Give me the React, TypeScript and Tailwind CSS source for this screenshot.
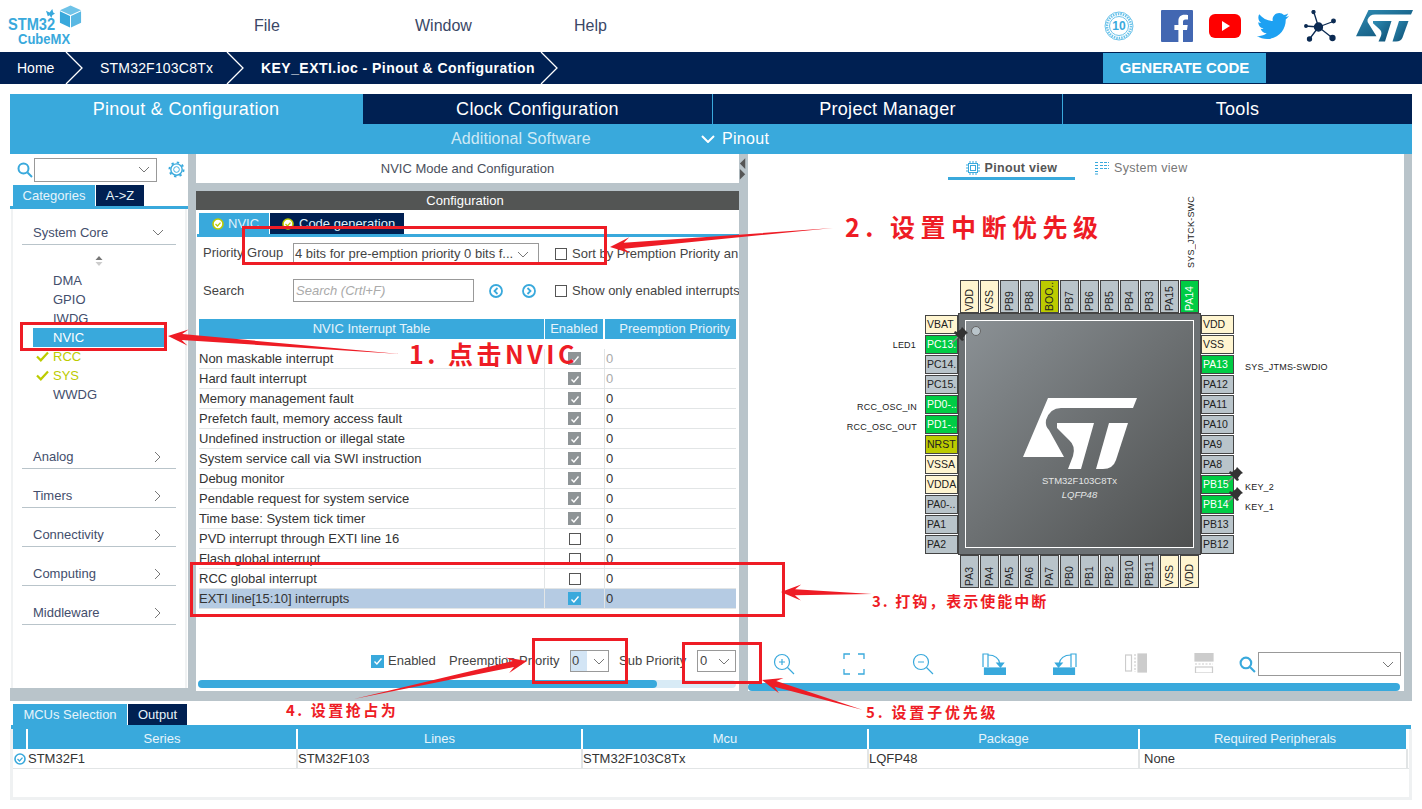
import { FaTwitter } from "react-icons/fa";

const BLUE = "#39a9dc";

const INTERRUPTS = [
  "Non maskable interrupt",
  "Hard fault interrupt",
  "Memory management fault",
  "Prefetch fault, memory access fault",
  "Undefined instruction or illegal state",
  "System service call via SWI instruction",
  "Debug monitor",
  "Pendable request for system service",
  "Time base: System tick timer",
  "PVD interrupt through EXTI line 16",
  "Flash global interrupt",
  "RCC global interrupt",
  "EXTI line[15:10] interrupts",
];

const TOP_PINS = ["VDD", "VSS", "PB9", "PB8", "BOO..", "PB7", "PB6", "PB5", "PB4", "PB3", "PA15", "PA14"];
const LEFT_PINS = ["VBAT", "PC13..", "PC14..", "PC15..", "PD0-..", "PD1-..", "NRST", "VSSA", "VDDA", "PA0-..", "PA1", "PA2"];
const RIGHT_PINS = ["VDD", "VSS", "PA13", "PA12", "PA11", "PA10", "PA9", "PA8", "PB15", "PB14", "PB13", "PB12"];
const BOTTOM_PINS = ["PA3", "PA4", "PA5", "PA6", "PA7", "PB0", "PB1", "PB2", "PB10", "PB11", "VSS", "VDD"];

const GREEN_PINS = ["PA14", "PC13..", "PD0-..", "PD1-..", "PA13", "PB15", "PB14"];
const OLIVE_PINS = ["BOO..", "NRST"];
const POWER_PINS = ["VDD", "VSS", "VBAT", "VSSA", "VDDA"];

function pinColor(name: string) {
  if (GREEN_PINS.includes(name)) return "bg-[#00cc44] text-white";
  if (OLIVE_PINS.includes(name)) return "bg-[#bccb00] text-[#222]";
  if (POWER_PINS.includes(name)) return "bg-[#fff5d0] text-[#222]";
  return "bg-[#b9c4ca] text-[#222]";
}

function Chevron({ className = "" }: { className?: string }) {
  return (
    <svg viewBox="0 0 12 7" className={`h-[7px] w-[12px] ${className}`} fill="none" stroke="#777" strokeWidth="1">
      <path d="M1 1l5 5 5-5" />
    </svg>
  );
}

function SearchIcon({ className = "" }: { className?: string }) {
  return (
    <svg viewBox="0 0 16 16" className={className} fill="none" stroke={BLUE} strokeWidth="2">
      <circle cx="6.5" cy="6.5" r="5" />
      <path d="M10.5 10.5l4.5 4.5" />
    </svg>
  );
}

function TickBadge({ color = "#bccb00" }: { color?: string }) {
  return (
    <svg viewBox="0 0 12 12" className="h-[12px] w-[12px] shrink-0">
      <circle cx="6" cy="6" r="5" fill="#fff" stroke={color} strokeWidth="1.6" />
      <path d="M3.5 6l2 2 3-3.4" fill="none" stroke={color} strokeWidth="1.3" />
    </svg>
  );
}

function Checkbox({ state }: { state: "off" | "grey" | "blue" }) {
  if (state === "off") return <span className="block h-[12px] w-[12px] shrink-0 border border-[#555] bg-white" />;
  return (
    <span className={`flex h-[13px] w-[13px] shrink-0 items-center justify-center ${state === "grey" ? "bg-[#8e9496]" : "bg-[#39a9dc]"}`}>
      <svg viewBox="0 0 10 10" className="h-[10px] w-[10px]" fill="none" stroke="#fff" strokeWidth="1.4">
        <path d="M1.5 5.5l2.4 2.4 4.6-5.4" />
      </svg>
    </span>
  );
}

function Logo() {
  return (
    <div className="relative h-[52px] w-[90px] shrink-0 text-[#39a9dc]">
      <span className="absolute left-[8px] top-[17px] origin-left scale-x-[0.86] text-[17px] font-bold leading-[15px]">STM32</span>
      <span className="absolute left-[18px] top-[32px] origin-left scale-x-[0.84] text-[15.500px] font-bold leading-[13px]">CubeMX</span>
      <svg viewBox="0 0 26 26" className="absolute left-[58px] top-[4px] h-[26px] w-[25px]">
        <path d="M13 1l11 5-11 5L2 6z" fill="#6fc3e8" />
        <path d="M2 7l10.5 5v12L2 19z" fill="#39a9dc" />
        <path d="M24 7l-10.500 5v12L24 19z" fill="#5ab8e3" />
      </svg>
      <svg viewBox="0 0 10 10" className="absolute left-[46px] top-[9px] h-[9px] w-[9px]" fill="#39a9dc">
        <path d="M0 2l4 2 3-4 1 4 2 1-3 2-1 3-2-3-2 1z" />
      </svg>
    </div>
  );
}

function StLogo({ className = "", fill }: { className?: string; fill: string }) {
  return (
    <svg viewBox="0 0 114 72" preserveAspectRatio="none" className={className}>
      <defs>
        <linearGradient id="stgrad" x1="0" y1="0" x2="1" y2="1">
          <stop offset="0" stopColor="#2f8db5" />
          <stop offset="1" stopColor="#0b4a6f" />
        </linearGradient>
      </defs>
      <g fill={fill}>
        <path d="M25 0H114L110 10H38Q27 10 23 22Q22 28 26 32L41 59H0Z" />
        <path d="M34 25H71L58 71H45L50 58Q53 48 46 42L34 30Z" />
        <path d="M86 25H105L93 62Q90 71 80 71H73Z" />
      </g>
    </svg>
  );
}

function SocialIcons() {
  return (
    <div className="flex items-center">
      <svg viewBox="0 0 30 30" className="mr-[27px] h-[30px] w-[30px]" fill="none" stroke="#6cc3ea">
        <circle cx="15" cy="15" r="14" strokeWidth="1" />
        <circle cx="15" cy="15" r="12" strokeWidth="2.500" strokeDasharray="1.500 1" />
        <circle cx="15" cy="15" r="9.500" strokeWidth="1" />
        <text x="15" y="19" textAnchor="middle" fontSize="12" fontWeight="700" fill="#39a9dc" stroke="none">10</text>
      </svg>
      <svg viewBox="0 0 32 32" className="mr-[16px] h-[32px] w-[32px]">
        <rect width="32" height="32" rx="1" fill="#4267b2" />
        <path d="M22 32V20h4l.7-5H22v-3c0-1.500.6-2.500 2.500-2.500H27V5c-.6-.1-2-.2-3.600-.2-3.600 0-6 2.200-6 6.100V15h-4v5h4v12z" fill="#fff" />
      </svg>
      <svg viewBox="0 0 32 24" className="mr-[16px] h-[24px] w-[32px]">
        <rect width="32" height="24" rx="6" fill="#f00" />
        <path d="M13 7l8 5-8 5z" fill="#fff" />
      </svg>
      <FaTwitter className="mr-[15px] h-[32px] w-[32px] text-[#1da1f2]" />
      <svg viewBox="0 0 32 32" className="mr-[19px] h-[32px] w-[33px]" stroke="#0b2a52" strokeWidth="1.300" fill="#0b2a52">
        <path d="M14 17L9 1M14 17L30 11M14 17L1 16M14 17L5 29M14 17L28 28" />
        <circle cx="14" cy="17" r="4" />
        <circle cx="9" cy="2" r="1.500" />
        <circle cx="29" cy="11" r="1.800" />
        <circle cx="1.500" cy="16" r="1.300" />
        <circle cx="5" cy="29" r="2" />
        <circle cx="28" cy="28" r="2.500" />
      </svg>
      <StLogo className="h-[32px] w-[57px]" fill="url(#stgrad)" />
    </div>
  );
}

function Breadcrumb() {
  return (
    <div className="relative flex h-[32px] items-center bg-[#002052] text-[14px] text-white">
      <span className="ml-[17px] w-[83px]">Home</span>
      <span className="w-[161px] tracking-[0.2px]">STM32F103C8Tx</span>
      <span className="font-bold tracking-[0.45px]">KEY_EXTI.ioc - Pinout &amp; Configuration</span>
      <svg viewBox="0 0 560 32" className="absolute left-0 top-0 h-[32px] w-[560px]" fill="none" stroke="#fff" strokeWidth="1.300">
        <path d="M66 0l16 16-16 16M227 0l16 16-16 16M541 0l16 16-16 16" />
      </svg>
      <button className="absolute left-[1103px] top-[1px] h-[30px] w-[163px] bg-[#39a9dc] text-[15px] font-bold text-white">
        GENERATE CODE
      </button>
    </div>
  );
}

function ModeTabs() {
  return (
    <div className="mx-[10px] mt-[10px] bg-[#39a9dc] text-white">
      <div className="flex h-[30px] items-center text-[18px] leading-[31px] tracking-[0.3px]">
        <div className="h-full w-[353px] pr-[1px] text-center">Pinout &amp; Configuration</div>
        <div className="h-full w-[349px] bg-[#002052] text-center">Clock Configuration</div>
        <div className="ml-[1px] h-full w-[349px] bg-[#002052] text-center">Project Manager</div>
        <div className="ml-[1px] h-full w-[349px] bg-[#002052] text-center">Tools</div>
      </div>
      <div className="flex h-[30px] items-center text-[16px] tracking-[0.1px]">
        <span className="ml-[441px] w-[250px] text-[#cfe9f6]">Additional Software</span>
        <svg viewBox="0 0 14 8" className="h-[8px] w-[14px]" fill="none" stroke="#fff" strokeWidth="2">
          <path d="M1 1l6 6 6-6" />
        </svg>
        <span className="ml-[7px] tracking-[0.3px]">Pinout</span>
      </div>
    </div>
  );
}

function SideHeader({ label, open }: { label: string; open?: boolean }) {
  return (
    <div className="mx-[9px] flex h-[24px] items-center justify-between border-b border-[#b9c4ca] px-[11px] text-[#434e6c]">
      <span>{label}</span>
      {open ? (
        <Chevron className="mr-[1px]" />
      ) : (
        <svg viewBox="0 0 7 12" className="mr-[4px] h-[12px] w-[7px]" fill="none" stroke="#777">
          <path d="M1 1l5 5-5 5" />
        </svg>
      )}
    </div>
  );
}

function SideItem({ label }: { label: string }) {
  return (
    <span className="ml-[23px] flex items-center text-[#bccb00]">
      <svg viewBox="0 0 13 11" className="mr-[4px] h-[11px] w-[13px]" fill="none" stroke="#bccb00" strokeWidth="2.200">
        <path d="M1 5.500l3.800 3.800L12 1.500" />
      </svg>
      {label}
    </span>
  );
}

function Sidebar() {
  return (
    <aside className="flex h-[534px] w-[178px] flex-col bg-white text-[13px]">
      <div className="flex h-[31px] items-center pl-[7px]">
        <SearchIcon className="h-[16px] w-[16px]" />
        <div className="ml-[1px] flex h-[24px] w-[123px] items-center justify-end border border-[#999] pr-[6px]">
          <Chevron />
        </div>
        <svg viewBox="0 0 18 18" className="ml-[11px] h-[17px] w-[17px]" fill="none" stroke={BLUE}>
          <circle cx="9" cy="9" r="3" />
          <circle cx="9" cy="9" r="6" strokeWidth="1.500" />
          <circle cx="9" cy="9" r="7.500" strokeDasharray="2.500 3.400" strokeWidth="2" />
        </svg>
      </div>
      <div className="flex pl-[3px] text-[#e6f4fb]">
        <div className="flex h-[21px] w-[82px] items-center justify-center bg-[#39a9dc]">Categories</div>
        <div className="ml-[1px] flex h-[21px] w-[48px] items-center justify-center bg-[#002052]">A-&gt;Z</div>
      </div>
      <div className="h-[3px] bg-[#39a9dc]" />
      <div className="mx-[1px] flex-1 border-x-2 border-[#f0f2f3] pt-[12px]">
        <SideHeader label="System Core" open />
        <div className="flex h-[22px] items-end justify-center pb-[1px]">
          <svg viewBox="0 0 8 10" className="h-[10px] w-[8px]">
            <path d="M4 0l3.500 4h-7z" fill="#777" />
            <path d="M4 10l3.500-4h-7z" fill="#ccc" />
          </svg>
        </div>
        <div className="mt-[4px] flex flex-col leading-[19px] text-[#434e6c]">
          <span className="ml-[40px]">DMA</span>
          <span className="ml-[40px]">GPIO</span>
          <span className="ml-[40px]">IWDG</span>
          <span className="ml-[20px] w-[131px] bg-[#39a9dc] pl-[20px] text-white">NVIC</span>
          <SideItem label="RCC" />
          <SideItem label="SYS" />
          <span className="ml-[40px]">WWDG</span>
        </div>
        <div className="mt-[41px] flex flex-col gap-[15px]">
          {["Analog", "Timers", "Connectivity", "Computing", "Middleware"].map((c) => (
            <SideHeader key={c} label={c} />
          ))}
        </div>
      </div>
    </aside>
  );
}

function NvicTable() {
  return (
    <div className="ml-[3px] mt-[17px] w-[537px]">
      <div className="grid h-[19px] grid-cols-[346px_60px_131px] items-stretch text-[#e6f4fb]">
        <div className="mr-[1px] flex items-center justify-center bg-[#39a9dc]">NVIC Interrupt Table</div>
        <div className="mr-[2px] flex items-center justify-center bg-[#39a9dc]">Enabled</div>
        <div className="flex items-center justify-center bg-[#39a9dc] pl-[8px]">Preemption Priority</div>
      </div>
      <div className="mt-[11px]">
        {INTERRUPTS.map((name, i) => (
          <div
            key={name}
            className={`grid h-[20px] grid-cols-[346px_60px_131px] items-center border-b border-[#e2e5e6] ${i === 12 ? "bg-[#b5cbe3]" : ""}`}
          >
            <span className="h-full border-r border-[#e2e5e6] leading-[19px] text-[#333]">{name}</span>
            <span className="flex h-full items-center justify-center border-r border-[#e2e5e6]">
              <Checkbox state={i < 9 ? "grey" : i === 12 ? "blue" : "off"} />
            </span>
            <span className={`pl-[1px] ${i < 2 ? "text-[#aaa]" : "text-[#333]"}`}>0</span>
          </div>
        ))}
      </div>
    </div>
  );
}

function NvicPanel() {
  return (
    <section className="flex h-[537px] w-[543px] flex-col bg-[#b9c4ca] text-[13px] text-[#444]">
      <div className="flex h-[29px] shrink-0 items-center justify-center bg-white text-[#4a4f5c]">NVIC Mode and Configuration</div>
      <div className="mt-[8px] flex h-[19px] shrink-0 items-center justify-center bg-[#535554] pr-[5px] text-white">Configuration</div>
      <div className="flex flex-1 flex-col bg-white">
        <div className="flex pl-[3px] pt-[3px] text-[#dff1fa]">
          <div className="flex h-[21px] w-[70px] items-center gap-[4px] bg-[#39a9dc] pl-[13px]">
            <TickBadge />
            NVIC
          </div>
          <div className="ml-[1px] flex h-[21px] w-[134px] items-center gap-[5px] bg-[#002052] pl-[12px]">
            <TickBadge />
            Code generation
          </div>
        </div>
        <div className="ml-[1px] h-[3px] bg-[#39a9dc]" />
        <div className="flex h-[27px] items-end overflow-hidden whitespace-nowrap pl-[7px]">
          <span className="w-[90px] shrink-0 leading-[23px]">Priority Group</span>
          <div className="flex h-[21px] w-[246px] shrink-0 items-center justify-between border-x border-t border-[#999] pl-[1px] pr-[9px]">
            <span>4 bits for pre-emption priority 0 bits f...</span>
            <Chevron />
          </div>
          <div className="ml-[16px] flex h-[21px] items-center gap-[5px]">
            <Checkbox state="off" />
            <span>Sort by Premption Priority an</span>
          </div>
        </div>
        <div className="mt-[15px] flex h-[23px] items-center overflow-hidden whitespace-nowrap pl-[7px]">
          <span className="w-[90px] shrink-0">Search</span>
          <div className="flex h-[23px] w-[181px] shrink-0 items-center border border-[#999] pl-[2px] italic text-[#aaa]">Search (Crtl+F)</div>
          <svg viewBox="0 0 14 14" className="ml-[15px] h-[14px] w-[14px] shrink-0" fill="none" stroke={BLUE} strokeWidth="1.800">
            <circle cx="7" cy="7" r="6" />
            <path d="M8.500 4L5.500 7l3 3" />
          </svg>
          <svg viewBox="0 0 14 14" className="ml-[19px] h-[14px] w-[14px] shrink-0" fill="none" stroke={BLUE} strokeWidth="1.800">
            <circle cx="7" cy="7" r="6" />
            <path d="M5.500 4l3 3-3 3" />
          </svg>
          <div className="ml-[19px] flex items-center gap-[5px]">
            <Checkbox state="off" />
            <span>Show only enabled interrupts</span>
          </div>
        </div>
        <NvicTable />
        <div className="mt-[41px] flex h-[22px] items-center pl-[175px]">
          <Checkbox state="blue" />
          <span className="ml-[4px] w-[61px]">Enabled</span>
          <span className="w-[121px]">Preemption Priority</span>
          <div className="flex h-[22px] w-[39px] border border-[#999]">
            <span className="w-[16px] bg-[#d3e5f5] pl-[1px]">0</span>
            <Chevron className="ml-[6px] mt-[7px]" />
          </div>
          <span className="ml-[10px] w-[78px]">Sub Priority</span>
          <div className="flex h-[22px] w-[39px] items-center justify-between border border-[#999] pl-[2px] pr-[5px]">
            0
            <Chevron />
          </div>
        </div>
        <div className="ml-[2px] mt-[8px] h-[8px] w-[538px] rounded-full bg-[#d8ebf6]">
          <div className="h-full w-[459px] rounded-full bg-[#39a9dc]" />
        </div>
        <div className="h-[3px]" />
      </div>
    </section>
  );
}

function Pin({ name, vertical }: { name: string; vertical?: boolean }) {
  if (vertical) {
    return (
      <div className={`flex h-[33px] w-[19px] rotate-180 items-center justify-start border border-[#444] pt-[1px] text-[10.500px] leading-none [writing-mode:vertical-rl] ${pinColor(name)}`}>
        {name}
      </div>
    );
  }
  return (
    <div className={`flex h-[19px] w-[33px] items-center overflow-hidden whitespace-nowrap border border-[#444] pl-[1px] text-[10.500px] ${pinColor(name)}`}>
      {name}
    </div>
  );
}

function PushPin({ className }: { className: string }) {
  return (
    <svg viewBox="0 0 16 16" className={`absolute h-[16px] w-[16px] ${className}`}>
      <path d="M6 10L0 16" stroke="#888" strokeWidth="1.500" />
      <path d="M10 0L16 6L14 7L11 11L12 13L10 14L2 6L3 4L5 5L9 2Z" fill="#333" />
    </svg>
  );
}

function ChipDiagram() {
  return (
    <div className="relative ml-[177px] mt-[100px] h-[307px] w-[308px] text-[9px] tracking-[0.2px] text-[#222]">
      <div className="ml-[35px] flex gap-[1px] tracking-normal">
        {TOP_PINS.map((p, i) => (
          <Pin key={`t${i}`} name={p} vertical />
        ))}
      </div>
      <div className="flex tracking-normal">
        <div className="mt-[2px] flex flex-col gap-[1px]">
          {LEFT_PINS.map((p, i) => (
            <Pin key={`l${i}`} name={p} />
          ))}
        </div>
        <div className="flex h-[242px] w-[243px] shrink-0 items-center justify-center border border-[#444] bg-[#6c7174] p-[6px]">
          <div className="relative flex h-full w-full flex-col items-center border border-white bg-gradient-to-br from-[#8b9195] to-[#4e5050]">
            <span className="absolute left-[5px] top-[5px] h-[10px] w-[10px] rounded-full border border-[#666] bg-[#b9c4ca]" />
            <StLogo className="mt-[77px] h-[72px] w-[114px] shrink-0" fill="#fff" />
            <span className="mt-[4px] text-[9.500px] text-[#e4e6e6]">STM32F103C8Tx</span>
            <span className="text-[9.500px] italic text-[#e4e6e6]">LQFP48</span>
          </div>
        </div>
        <div className="mt-[2px] flex flex-col gap-[1px]">
          {RIGHT_PINS.map((p, i) => (
            <Pin key={`r${i}`} name={p} />
          ))}
        </div>
      </div>
      <div className="ml-[35px] flex gap-[1px] tracking-normal">
        {BOTTOM_PINS.map((p, i) => (
          <Pin key={`b${i}`} name={p} vertical />
        ))}
      </div>
      <span className="absolute right-[317px] top-[59px]">LED1</span>
      <span className="absolute right-[316px] top-[121px] whitespace-nowrap">RCC_OSC_IN</span>
      <span className="absolute right-[316px] top-[141px] whitespace-nowrap">RCC_OSC_OUT</span>
      <span className="absolute left-[320px] top-[81px] whitespace-nowrap">SYS_JTMS-SWDIO</span>
      <span className="absolute left-[320px] top-[201px]">KEY_2</span>
      <span className="absolute left-[320px] top-[221px]">KEY_1</span>
      <span className="absolute bottom-[319px] left-[262px] rotate-180 whitespace-nowrap leading-none [writing-mode:vertical-rl]">SYS_JTCK-SWC</span>
      <PushPin className="left-[27px] top-[47px]" />
      <PushPin className="left-[302px] top-[187px]" />
      <PushPin className="left-[302px] top-[207px]" />
    </div>
  );
}

function Toolbar() {
  return (
    <div className="mb-[7px] mt-auto flex h-[24px] items-center">
      <div className="ml-[25px] flex w-[441px] shrink-0 justify-between">
        <svg viewBox="0 0 22 22" className="h-[22px] w-[22px]" fill="none" stroke={BLUE} strokeWidth="1.200">
          <circle cx="9" cy="9" r="7.500" />
          <path d="M14.500 14.500l6.500 6.500M6 9h6M9 6v6" />
        </svg>
        <svg viewBox="0 0 22 22" className="h-[22px] w-[22px]" fill="none" stroke={BLUE} strokeWidth="1.300">
          <path d="M1 6V1h6M15 1h6v5M21 16v5h-6M7 21H1v-5" />
        </svg>
        <svg viewBox="0 0 22 22" className="h-[22px] w-[22px]" fill="none" stroke={BLUE} strokeWidth="1.200">
          <circle cx="9" cy="9" r="7.500" />
          <path d="M14.500 14.500l6.500 6.500M6 9h6" />
        </svg>
        <svg viewBox="0 0 24 22" className="h-[22px] w-[24px]" fill="none" stroke={BLUE} strokeWidth="1.200">
          <path d="M1 14V1h5v13" />
          <path d="M6 2c7 0 11 3 12 9" />
          <path d="M15 10l3.500 4 3-4z" fill={BLUE} />
          <rect x="2.500" y="15" width="21" height="7" fill={BLUE} />
        </svg>
        <svg viewBox="0 0 24 22" className="h-[22px] w-[24px]" fill="none" stroke={BLUE} strokeWidth="1.200">
          <path d="M23 14V1h-5v13" />
          <path d="M18 2C11 2 7 5 6 11" />
          <path d="M9 10l-3.500 4-3-4z" fill={BLUE} />
          <rect x="0.500" y="15" width="21" height="7" fill={BLUE} />
        </svg>
        <svg viewBox="0 0 22 20" className="h-[20px] w-[22px]" fill="none" stroke="#ccc" strokeWidth="1.200">
          <rect x="0.500" y="2" width="6" height="16" />
          <path d="M10 1v18" strokeDasharray="2 1.500" />
          <rect x="13" y="1" width="8.500" height="18" fill="#ccc" />
        </svg>
        <svg viewBox="0 0 20 20" className="h-[20px] w-[20px]" fill="none" stroke="#ccc" strokeWidth="1.200">
          <rect x="1" y="0" width="18" height="8" fill="#ccc" />
          <path d="M1 11h18" strokeDasharray="2 1.500" />
          <rect x="1.500" y="14" width="17" height="6" />
        </svg>
      </div>
      <SearchIcon className="ml-[25px] h-[17px] w-[17px] shrink-0" />
      <div className="ml-[2px] flex h-[24px] w-[143px] shrink-0 items-center justify-end border border-[#999] pr-[6px]">
        <Chevron />
      </div>
    </div>
  );
}

function PinoutPanel() {
  return (
    <section className="flex h-[537px] w-[656px] flex-col bg-white">
      <div className="flex h-[26px] items-start pl-[200px] text-[12.500px] tracking-[0.3px] text-[#555]">
        <div className="flex h-[26px] w-[127px] items-center justify-center gap-[5px] border-b-[3px] border-[#39a9dc] pt-[5px] font-bold">
          <svg viewBox="0 0 14 14" className="h-[14px] w-[14px]" fill="none" stroke={BLUE}>
            <rect x="2.500" y="2.500" width="9" height="9" />
            <rect x="4.500" y="4.500" width="5" height="5" />
            <path d="M4 0v2M7 0v2M10 0v2M4 12v2M7 12v2M10 12v2M0 4h2M0 7h2M0 10h2M12 4h2M12 7h2M12 10h2" />
          </svg>
          Pinout view
        </div>
        <div className="ml-[20px] flex h-[26px] items-center gap-[5px] pt-[2px] text-[#777]">
          <svg viewBox="0 0 14 14" className="h-[14px] w-[14px]" fill="none" stroke={BLUE} strokeDasharray="3 1">
            <path d="M0 1.500h4M0 4.500h4M0 7.500h4M0 10.500h4M0 13h4M5 1.500h9M5 4.500h9M5 7.500h9" />
          </svg>
          System view
        </div>
      </div>
      <ChipDiagram />
      <Toolbar />
      <div className="h-[8px] w-[652px] rounded-full bg-[#39a9dc]" />
    </section>
  );
}

function Divider() {
  return (
    <div className="flex h-[29px] w-[9px] flex-col">
      <svg viewBox="0 0 9 29" className="h-[29px] w-[8px]">
        <path d="M7 3L1 9l6 6z" fill="#555" />
        <path d="M1 15l6 6-6 6z" fill="#555" />
      </svg>
    </div>
  );
}

const BOTTOM_COLUMNS = [
  { head: "Series", cell: "STM32F1", w: "w-[270px]" },
  { head: "Lines", cell: "STM32F103", w: "w-[285px]" },
  { head: "Mcu", cell: "STM32F103C8Tx", w: "w-[286px]" },
  { head: "Package", cell: "LQFP48", w: "w-[271px]" },
  { head: "Required Peripherals", cell: "None", w: "w-[268px] pl-[4px]" },
];

function BottomPanel() {
  return (
    <div className="mx-[10px] mt-[3px] text-[13px]">
      <div className="flex pl-[3px] text-[#e6f4fb]">
        <div className="flex h-[21px] w-[114px] items-center justify-center bg-[#39a9dc]">MCUs Selection</div>
        <div className="ml-[1px] flex h-[21px] w-[59px] items-center justify-center bg-[#002052]">Output</div>
      </div>
      <div className="ml-[1px] h-[4px] w-[1400px] bg-[#39a9dc]" />
      <div className="h-[71px] w-[1402px] border-b-[3px] border-x-[3px] border-[#eff1f2] bg-white">
        <div className="flex h-[20px] text-[#e6f4fb]">
          <div className="mr-[2px] w-[13px] bg-[#39a9dc]" />
          {BOTTOM_COLUMNS.map((c) => (
            <div key={c.head} className={`${c.w} flex items-center justify-center border-r-2 border-white bg-[#39a9dc]`}>
              {c.head}
            </div>
          ))}
        </div>
        <div className="flex h-[20px] items-center border-b border-[#e2e5e6] text-[#333]">
          <div className="mr-[2px] flex w-[13px] justify-center">
            <TickBadge color={BLUE} />
          </div>
          {BOTTOM_COLUMNS.map((c) => (
            <div key={c.head} className={`${c.w} h-full border-r-2 border-[#e2e5e6] leading-[19px]`}>
              {c.cell}
            </div>
          ))}
        </div>
      </div>
    </div>
  );
}

function Arrow({ x1, y1, x2, y2 }: { x1: number; y1: number; x2: number; y2: number }) {
  const len = Math.hypot(x2 - x1, y2 - y1);
  const ux = (x2 - x1) / len;
  const uy = (y2 - y1) / len;
  const at = (back: number, side: number) =>
    `${x2 - ux * back - uy * side},${y2 - uy * back + ux * side}`;
  const points = [
    `${x1},${y1}`,
    at(14, 3),
    at(20, 8),
    at(0, 0),
    at(20, -8),
    at(14, -3),
  ].join(" ");
  return <polygon points={points} fill="#ee1c25" />;
}

function Annotations() {
  return (
    <div className="pointer-events-none absolute inset-0 text-[#ee1c25] [font-family:'Noto_Sans_CJK_SC',sans-serif]">
      <div className="absolute left-[20px] top-[322px] h-[29px] w-[147px] border-[3px] border-[#ee1c25]" />
      <div className="absolute left-[242px] top-[226px] h-[39px] w-[365px] border-[3px] border-[#ee1c25]" />
      <div className="absolute left-[190px] top-[562px] h-[55px] w-[595px] border-[3px] border-[#ee1c25]" />
      <div className="absolute left-[532px] top-[638px] h-[46px] w-[96px] border-[3px] border-[#ee1c25]" />
      <div className="absolute left-[682px] top-[642px] h-[42px] w-[80px] border-[3px] border-[#ee1c25]" />
      <svg className="absolute inset-0 h-full w-full">
        <Arrow x1={400} y1={354} x2={168} y2={336} />
        <Arrow x1={833} y1={228} x2={610} y2={247} />
        <Arrow x1={872} y1={594} x2={781} y2={592} />
        <Arrow x1={354} y1={699} x2={527} y2={661} />
        <Arrow x1={863} y1={710} x2={762} y2={680} />
      </svg>
      <span className="absolute left-[409px] top-[336px] text-[25px] font-bold leading-[34px] tracking-[3.500px]">1. 点击NVIC</span>
      <span className="absolute left-[845px] top-[209px] text-[25px] font-bold leading-[34px] tracking-[5.500px]">2. 设置中断优先级</span>
      <span className="absolute left-[872px] top-[590px] text-[15px] font-bold leading-[22px] tracking-[2px]">3. 打钩，表示使能中断</span>
      <span className="absolute left-[286px] top-[699px] text-[15px] font-bold leading-[22px] tracking-[2.500px]">4. 设置抢占为</span>
      <span className="absolute left-[866px] top-[701px] text-[15px] font-bold leading-[22px] tracking-[2.800px]">5. 设置子优先级</span>
    </div>
  );
}

export default function App() {
  return (
    <div className="relative h-[809px] w-[1422px] overflow-hidden bg-white [font-family:'Liberation_Sans',Arial,sans-serif]">
      <header className="flex h-[52px] items-center">
        <Logo />
        <nav className="flex text-[16px] text-[#3a4766]">
          <span className="ml-[164px] w-[161px]">File</span>
          <span className="w-[159px]">Window</span>
          <span>Help</span>
        </nav>
        <div className="ml-auto mr-[9px]">
          <SocialIcons />
        </div>
      </header>
      <Breadcrumb />
      <ModeTabs />
      <div className="mx-[10px] flex h-[547px] items-start bg-[#b9c4ca]">
        <Sidebar />
        <div className="w-[8px]" />
        <NvicPanel />
        <Divider />
        <PinoutPanel />
      </div>
      <BottomPanel />
      <Annotations />
    </div>
  );
}
